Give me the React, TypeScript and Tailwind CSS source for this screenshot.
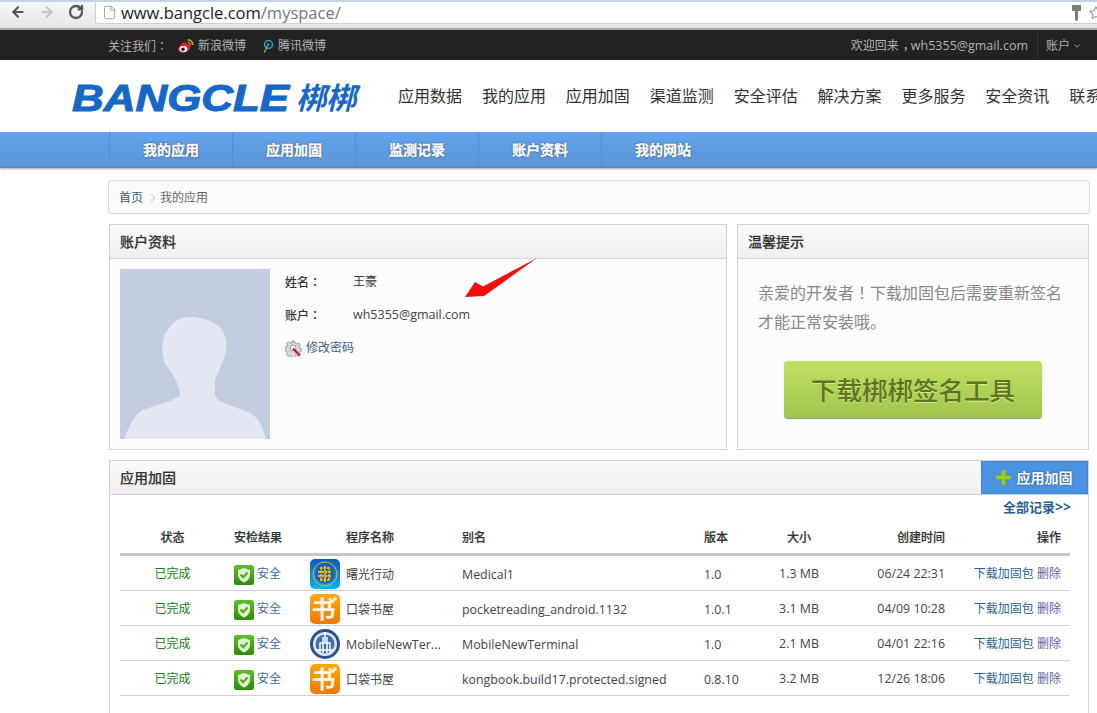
import React from "react";
import { ArrowLeft, ArrowRight, RotateCw, File, ChevronDown, ChevronRight, Star } from "lucide-react";

const FONT = "font-['Open_Sans','Noto_Sans_CJK_SC',sans-serif]";

function Punct({ children }: { children: React.ReactNode }) {
  return <span className="font-['Noto_Sans_CJK_TC',sans-serif]">{children}</span>;
}

function Weibo() {
  return (
    <svg width="17" height="15" viewBox="0 0 17 15" className="mr-[4px]">
      <path d="M1 10.500C1 7.500 5 3.500 8 3.200c2-.2 2.300 1.200 2 2.400 2-.7 3.600-.3 3.600 1.400C13.600 10.500 9.500 14 6 14c-2.800 0-5-1.300-5-3.500z" fill="#d9232e" />
      <ellipse cx="6.500" cy="10" rx="4" ry="2.900" fill="#fff" />
      <circle cx="6" cy="10.200" r="1.700" fill="#111" />
      <path d="M10.500 1.200c3-.7 5.500 1.800 5 4.800" stroke="#e8a020" strokeWidth="1.600" fill="none" />
      <path d="M11 3.600c1.400-.2 2.400.8 2.100 2.200" stroke="#e8a020" strokeWidth="1.200" fill="none" />
    </svg>
  );
}

function Tencent() {
  return (
    <svg width="12" height="15" viewBox="0 0 12 15" className="mr-[4px]">
      <circle cx="6.500" cy="5.500" r="4" stroke="#2f9fc0" strokeWidth="1.500" fill="none" />
      <circle cx="6.500" cy="5.500" r="1.300" fill="#2f9fc0" />
      <path d="M5.500 6.500C4.500 9 3.500 11 2.200 13.500" stroke="#9ab83a" strokeWidth="1.300" fill="none" />
    </svg>
  );
}

function Avatar() {
  return (
    <svg width="150" height="170" viewBox="0 0 150 170" className="shrink-0">
      <rect width="150" height="170" fill="#c3cce0" />
      <path
        d="M4 170C10 155 14 146 23 141C33 137 45 134 52 131L60 127C60 120 56 110 52 104C48 98 44 95 44 91C42 84 42 78 43 72C44 66 45 64 48 61C51 55 55 52 60 50C65 48 69 48 73 48C82 49 92 52 97 56C103 60 105 66 106 71C107 78 106 85 103 91C101 98 97 105 95 111L95 126C97 130 99 132 102 133C112 138 122 140 130 144C138 148 143 158 146 170Z"
        fill="#e3e7f2"
      />
    </svg>
  );
}

function Gear() {
  return (
    <svg width="17" height="17" viewBox="0 0 17 17" className="mr-[4px]">
      <path
        d="M7 1h2.500l.5 2 1.800.8 1.800-1 1.500 1.700-1 1.700.7 1.900 2 .5v2.400l-2 .5-.7 1.800 1 1.700-1.700 1.500-1.700-1-1.900.7-.5 2H7l-.5-2-1.800-.7-1.700 1-1.600-1.600 1-1.800-.7-1.800-1.700-.5V7.500l1.800-.5.700-1.800-1-1.800L3.600 2l1.700 1L7 2.900z"
        fill="#d8d8d8"
        stroke="#8a8a8a"
        strokeWidth="0.800"
      />
      <circle cx="8" cy="8" r="3" fill="#fff" stroke="#999" />
      <path d="M8 8.500l7 7" stroke="#d6152c" strokeWidth="2.200" />
    </svg>
  );
}

function Shield() {
  return (
    <svg width="20" height="20" viewBox="0 0 20 20" className="mr-[3px] shrink-0 translate-y-[1px]">
      <defs>
        <linearGradient id="sg" x1="0" y1="0" x2="0" y2="1">
          <stop offset="0" stopColor="#5cc02a" />
          <stop offset="1" stopColor="#2c8c08" />
        </linearGradient>
      </defs>
      <rect width="20" height="20" rx="2.500" fill="url(#sg)" />
      <path d="M10 3l6 2v5c0 3.500-3 6-6 7.500C7 16 4 13.500 4 10V5z" fill="#e3f2cf" />
      <path d="M6.500 9.500l2.700 2.700 4.300-4.700" stroke="#4aa81e" strokeWidth="2" fill="none" />
    </svg>
  );
}

function AppIconMed() {
  return (
    <svg width="30" height="30" viewBox="0 0 30 30" className="shrink-0">
      <defs>
        <linearGradient id="mg" x1="0" y1="0" x2="0" y2="1">
          <stop offset="0" stopColor="#0a58c0" />
          <stop offset="1" stopColor="#08b4f0" />
        </linearGradient>
      </defs>
      <rect width="30" height="30" rx="5" fill="url(#mg)" />
      <circle cx="15" cy="15" r="12" fill="none" stroke="#e8b820" strokeWidth="1" />
      <circle cx="15" cy="15" r="9.500" fill="#1a63b0" />
      <path d="M10 9h10M8 13h14M8 17h14M10 21h10M15 7v16M11 8v14M19 8v14" stroke="#efb41c" strokeWidth="2" strokeDasharray="2.500 1" />
    </svg>
  );
}

function AppIconBook() {
  return (
    <div className="relative flex h-[30px] w-[30px] shrink-0 items-center justify-center rounded-[5px] bg-gradient-to-b from-[#ffa908] to-[#ef7a00]">
      <span className="pr-[3px] text-[24px] font-bold leading-[30px] text-[#fdf4e4]">书</span>
      <span className="absolute right-[3px] top-[3px] h-[4px] w-[4px] rounded-full bg-[#fdf4e4]" />
    </div>
  );
}

function AppIconTerm() {
  return (
    <svg width="30" height="30" viewBox="0 0 30 30" className="shrink-0">
      <circle cx="15" cy="15" r="15" fill="#28528f" />
      <circle cx="15" cy="15" r="12" fill="#dfe7f2" />
      <circle cx="15" cy="15" r="9.500" fill="#3f6fb0" />
      <path d="M5 21h20M10 24V14h10v10M13 24V8M17 24V8M15 3v10" stroke="#fff" strokeWidth="1.500" fill="none" />
    </svg>
  );
}

const navTop = ["应用数据", "我的应用", "应用加固", "渠道监测", "安全评估", "解决方案", "更多服务", "安全资讯", "联系我们"];
const navSub = ["我的应用", "应用加固", "监测记录", "账户资料", "我的网站"];

const rows = [
  { icon: <AppIconMed />, name: "曙光行动", latin: false, alias: "Medical1", ver: "1.0", size: "1.3 MB", time: "06/24 22:31" },
  { icon: <AppIconBook />, name: "口袋书屋", latin: false, alias: "pocketreading_android.1132", ver: "1.0.1", size: "3.1 MB", time: "04/09 10:28" },
  { icon: <AppIconTerm />, name: "MobileNewTer...", latin: true, alias: "MobileNewTerminal", ver: "1.0", size: "2.1 MB", time: "04/01 22:16" },
  { icon: <AppIconBook />, name: "口袋书屋", latin: false, alias: "kongbook.build17.protected.signed", ver: "0.8.10", size: "3.2 MB", time: "12/26 18:06" },
];

function PanelHead({ title }: { title: string }) {
  return (
    <div className="flex h-[34px] items-center border-b border-[#d4d4d4] bg-gradient-to-b from-[#fbfbfb] to-[#efefef] pl-[10px] text-[14px] font-medium text-[#333] [-webkit-text-stroke:0.2px_#333]">
      {title}
    </div>
  );
}

const th = "h-[36px] border-b-[3px] border-[#c8c8c8] pt-[3px] font-medium";
const td = "h-[35px] border-b border-[#cfcfcf] pt-[2px]";
const tdLow = "h-[35px] border-b border-[#cfcfcf] pt-[4px]";

export default function App() {
  return (
    <div className={`relative h-[713px] w-[1097px] overflow-hidden bg-white ${FONT}`}>
      {/* browser chrome */}
      <div className="h-[2px] bg-[#c6d1e4]" />
      <div className="flex h-[28px] border-b-2 border-[#a9a9a9] bg-gradient-to-b from-[#f7f7f7] to-[#e6e6e6]">
        <div className="flex w-[95px] items-start gap-[13px] pl-[10px] pt-[2px]">
          <ArrowLeft size={16} strokeWidth={3.200} className="text-[#555]" />
          <ArrowRight size={16} strokeWidth={3.200} className="text-[#c4c4c4]" />
          <RotateCw size={16} strokeWidth={3.400} className="text-[#555]" />
        </div>
        <div className="flex h-[22px] flex-1 items-center rounded-bl-[3px] border-b border-l border-[#cfcfcf] bg-white pl-[6px] pr-[2px]">
          <File size={15} strokeWidth={1.200} className="mr-[4px] text-[#888]" />
          <span className="text-[16.500px] leading-[22px] text-[#222]">
            www.bangcle.com<span className="text-[#777]">/myspace/</span>
          </span>
          <div className="ml-auto flex items-center gap-[8px]">
            <svg width="9" height="16" viewBox="0 0 9 16">
              <path d="M0 0h9v6H6v9l-1.500 1L3 15V6H0z" fill="#7d7d7d" />
            </svg>
            <Star size={14} className="-mr-[8px] text-[#999]" />
          </div>
        </div>
      </div>

      {/* top bar */}
      <div className="flex h-[30px] items-center bg-[#222] pl-[108px] pt-[2px] text-[12px] text-[#b4b4b4]">
        <span className="mr-[10px] w-[59px] whitespace-nowrap">
          关注我们<Punct>：</Punct>
        </span>
        <Weibo />
        <span className="mr-[16px]">新浪微博</span>
        <Tencent />
        <span>腾讯微博</span>
        <span className="ml-auto">
          欢迎回来<span className="ml-[4px] tracking-[-4px]">，</span>
          <span className="text-[12.500px]">wh5355@gmail.com</span>
        </span>
        <div className="ml-[9px] flex h-full w-[60px] items-center border-l border-[#333] pl-[8px]">
          账户
          <ChevronDown size={10} className="ml-[2px]" />
        </div>
      </div>

      {/* header */}
      <div className="flex h-[72px] items-center pl-[72px]">
        <div className="flex w-[326px] shrink-0 items-center pt-[5px] font-['Liberation_Sans','Noto_Sans_CJK_SC',sans-serif] font-bold italic text-[#1567c8]">
          <span className="inline-block w-[224px] origin-left scale-x-[1.22] text-[36px] leading-[36px] [-webkit-text-stroke:1px_#1567c8]">BANGCLE</span>
          <span className="text-[30px] leading-[36px]">梆梆</span>
        </div>
        <div className="flex shrink-0 gap-[19.900px] whitespace-nowrap text-[16px] text-[#333]">
          {navTop.map((n) => (
            <span key={n}>{n}</span>
          ))}
        </div>
      </div>

      {/* sub nav */}
      <div className="flex h-[36px] border-b border-[#5088c8] bg-gradient-to-b from-[#62a4ec] to-[#5c94d6] pl-[109px] shadow-[0_1px_2px_rgba(0,0,0,0.35)]">
        {navSub.map((n) => (
          <div
            key={n}
            className="w-[123px] border-l border-[#4f8fd8] pl-[33px] text-[14px] font-bold leading-[36px] text-white [-webkit-text-stroke:0.3px_#fff] [text-shadow:0_0_2px_rgba(20,40,70,1)]"
          >
            {n}
          </div>
        ))}
      </div>

      {/* content */}
      <div className="ml-[108px] mt-[12px] w-[982px]">
        <div className="flex h-[34px] items-center rounded-[3px] border border-[#d8d8d8] bg-[#fbfbfb] pl-[10px] pt-[2px] text-[12px] text-[#666]">
          <span className="text-[#3c5a78]">首页</span>
          <ChevronRight size={14} strokeWidth={1} className="ml-[3px] text-[#888]" />
          <span>我的应用</span>
        </div>

        <div className="ml-[1px] mt-[10px] flex w-[980px] gap-[10px]">
          <div className="h-[226px] w-[618px] border border-[#d4d4d4] bg-[#fcfcfc]">
            <PanelHead title="账户资料" />
            <div className="flex pl-[10px] pt-[10px]">
              <Avatar />
              <div className="ml-[15px] text-[12px] text-[#444]">
                <div className="flex h-[26px] items-center">
                  <span className="w-[68px] font-medium text-[#333]">
                    姓名<Punct>：</Punct>
                  </span>
                  <span className="text-[#333]">王豪</span>
                </div>
                <div className="mt-[7px] flex h-[26px] items-center">
                  <span className="w-[68px] font-medium text-[#333]">
                    账户<Punct>：</Punct>
                  </span>
                  <span className="text-[12.500px]">wh5355@gmail.com</span>
                </div>
                <div className="mt-[7px] flex h-[26px] items-center text-[#44618a]">
                  <Gear />
                  修改密码
                </div>
              </div>
            </div>
          </div>

          <div className="h-[226px] w-[352px] border border-[#d4d4d4] bg-[#fcfcfc]">
            <PanelHead title="温馨提示" />
            <div className="px-[20px] pt-[19px] text-[16px] leading-[29px] text-[#888]">
              亲爱的开发者<Punct>！</Punct>下载加固包后需要重新签名
              <br />
              才能正常安装哦。
            </div>
            <div className="ml-[46px] mt-[24px] flex h-[58px] w-[258px] items-center justify-center rounded-[4px] border-b border-t border-b-[#999] border-t-[#cfe46a] bg-gradient-to-b from-[#c0df62] to-[#a2c34e] text-[25.500px] font-medium text-[#5f7226] shadow-[0_0_1px_#999] [text-shadow:0_1px_0_#d4ec80]">
              下载梆梆签名工具
            </div>
          </div>
        </div>

        <div className="ml-[1px] mt-[10px] h-[300px] w-[980px] border border-[#d4d4d4] bg-white">
          <div className="flex h-[34px] items-center border-b border-[#d4d4d4] bg-gradient-to-b from-[#fbfbfb] to-[#efefef] pl-[10px] text-[14px] font-medium text-[#333]">
            <span className="[-webkit-text-stroke:0.2px_#333]">应用加固</span>
            <div className="ml-auto flex h-[33px] w-[107px] items-center justify-center gap-[6px] border border-[#3f85d6] bg-[#4a92e2] pr-[1px] text-[14px] font-bold text-white [text-shadow:0_0_2px_rgba(30,60,110,0.8)]">
              <svg width="15" height="15" viewBox="0 0 15 15">
                <path d="M5.500 0h4v5.500H15v4H9.500V15h-4V9.500H0v-4h5.500z" fill="#9ccc1c" stroke="#6e9e10" strokeWidth="0.500" />
              </svg>
              应用加固
            </div>
          </div>

          <div className="h-[25px] pr-[17px] text-right text-[13px] font-bold leading-[24px] text-[#2a6090]">
            全部记录<span className="text-[14px]">&gt;&gt;</span>
          </div>

          <table className="ml-[10px] w-[950px] table-fixed border-separate border-spacing-0 text-[12px] text-[#444]">
            <colgroup>
              <col className="w-[105px]" />
              <col className="w-[85px]" />
              <col className="w-[152px]" />
              <col className="w-[242px]" />
              <col className="w-[65px]" />
              <col className="w-[60px]" />
              <col className="w-[116px]" />
              <col className="w-[125px]" />
            </colgroup>
            <thead className="text-[#333] [-webkit-text-stroke:0.2px_#333]">
              <tr>
                <th className={`${th} text-center`}>状态</th>
                <th className={`${th} pl-[9px] text-left`}>安检结果</th>
                <th className={`${th} pl-[36px] text-left`}>程序名称</th>
                <th className={`${th} text-left`}>别名</th>
                <th className={`${th} text-left`}>版本</th>
                <th className={`${th} text-center`}>大小</th>
                <th className={`${th} text-right`}>创建时间</th>
                <th className={`${th} pr-[9px] text-right`}>操作</th>
              </tr>
            </thead>
            <tbody>
              {rows.map((r, i) => (
                <tr key={i}>
                  <td className={`${td} text-center text-[#0f7f0f]`}>已完成</td>
                  <td className={`${td} pl-[9px]`}>
                    <div className="flex items-center text-[#3f6aa8]">
                      <Shield />
                      安全
                    </div>
                  </td>
                  <td className={td}>
                    <div className={r.latin ? "flex items-center gap-[6px] whitespace-nowrap text-[12.500px] text-[#444]" : "flex items-center gap-[6px] whitespace-nowrap text-[#444]"}>
                      {r.icon}
                      <span className="translate-y-[1px]">{r.name}</span>
                    </div>
                  </td>
                  <td className={`${tdLow} text-[12.400px]`}>{r.alias}</td>
                  <td className={`${tdLow} text-[12.400px]`}>{r.ver}</td>
                  <td className={`${td} text-center text-[12.400px]`}>{r.size}</td>
                  <td className={`${td} text-right text-[12.400px]`}>{r.time}</td>
                  <td className={`${td} whitespace-nowrap pr-[9px] text-right`}>
                    <span className="text-[#2c5f96]">下载加固包</span> <span className="text-[#5a62a8]">删除</span>
                  </td>
                </tr>
              ))}
            </tbody>
          </table>
        </div>
      </div>

      {/* annotation arrow painted on the screenshot */}
      <svg width="80" height="44" viewBox="0 0 80 44" className="absolute left-[460px] top-[256px]">
        <path d="M5 41L15 26L23 30.500L77 2L29 36.500L24 40Z" fill="#f40d0d" />
      </svg>
    </div>
  );
}
